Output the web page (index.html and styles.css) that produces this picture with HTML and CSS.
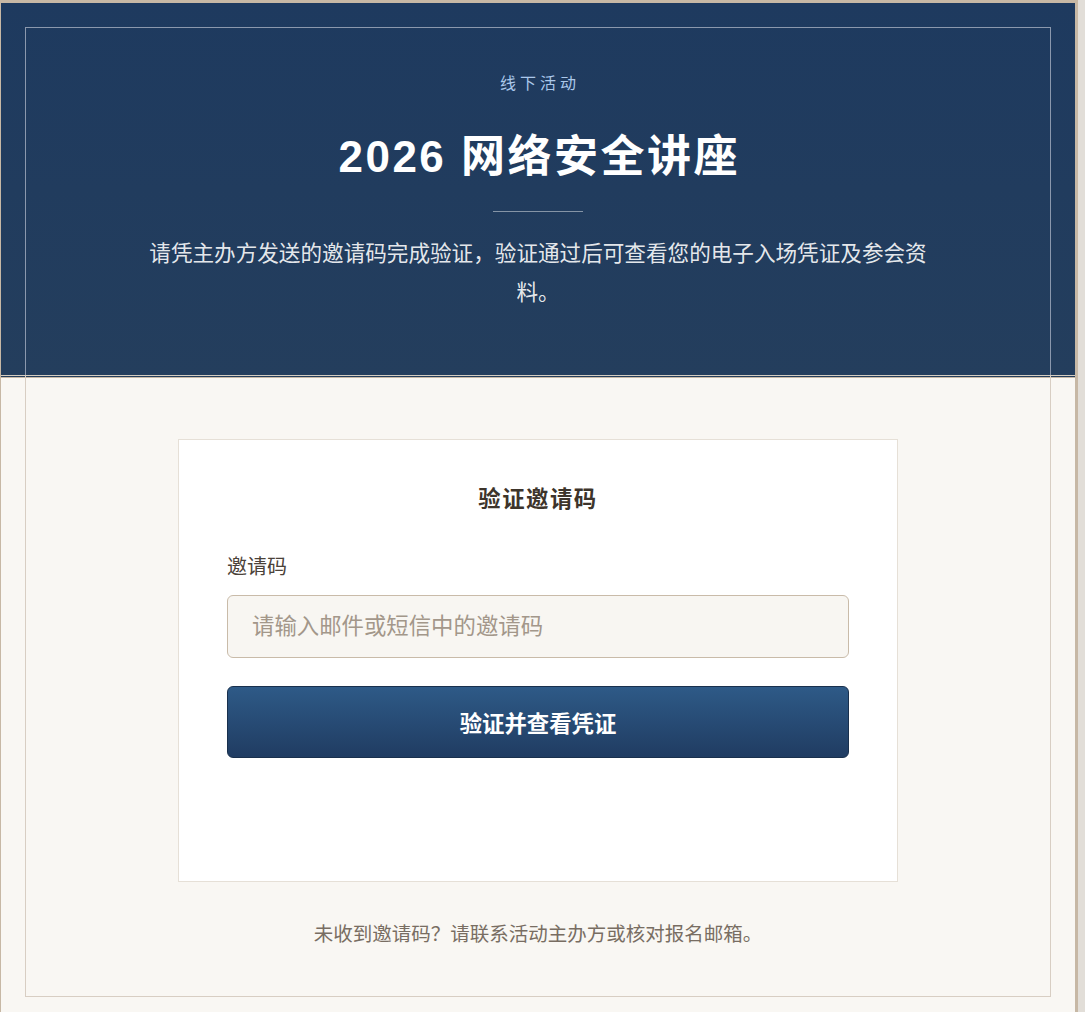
FILE: index.html
```html
<!DOCTYPE html>
<html lang="zh-CN">
<head>
<meta charset="utf-8">
<title>2026 网络安全讲座 - 验证邀请码</title>
<link rel="stylesheet" href="styles.css">
</head>
<body>
<div class="page">
  <header class="hero">
    <p class="eyebrow">线下活动</p>
    <h1 class="title">2026 网络安全讲座</h1>
    <div class="divider"></div>
    <p class="intro">请凭主办方发送的邀请码完成验证，验证通过后可查看您的电子入场凭证及参会资料。</p>
  </header>
  <main class="content">
    <form class="card" onsubmit="return false;">
      <h2 class="card-title">验证邀请码</h2>
      <label class="field-label" for="code">邀请码</label>
      <input class="field-input" id="code" type="text" placeholder="请输入邮件或短信中的邀请码">
      <button class="submit" type="submit">验证并查看凭证</button>
      <p class="message" aria-live="polite"></p>
    </form>
    <p class="help">未收到邀请码？请联系活动主办方或核对报名邮箱。</p>
  </main>
  <div class="frame"></div>
</div>
</body>
</html>
```
FILE: styles.css
```css
html {
  background: linear-gradient(to right, #c7b8a5 0, #c7b8a5 1078px, #e2ded8 1078px);
  overflow: hidden;
}
body {
  margin: 0;
  padding: 3px 0 0 1px;
  font-family: "Liberation Sans", "Noto Sans CJK SC", sans-serif;
}
.page {
  position: relative;
  width: 1074px;
  min-height: 1018px;
  background: #f9f7f3;
}
.hero {
  box-sizing: border-box;
  height: 375px;
  padding-top: 71px;
  background: linear-gradient(180deg, #1e3a5f 0%, #243e5d 100%);
  border-bottom: 1px solid #c7b8a5;
  box-shadow: inset 0 -1px 0 #243e5d, inset 0 -2px 0 #d6cec2;
  text-align: center;
}
.eyebrow {
  margin: 0;
  font-size: 16px;
  line-height: 20px;
  letter-spacing: 4px;
  padding-left: 4px;
  color: #abc8ea;
}
.title {
  margin: 38px 0 0;
  font-size: 44px;
  line-height: 50px;
  font-weight: 700;
  letter-spacing: 2.5px;
  padding-left: 2.5px;
  color: #ffffff;
}
.divider {
  width: 90px;
  height: 1px;
  margin: 29px auto 0;
  background: rgba(255, 255, 255, 0.45);
}
.intro {
  max-width: 780px;
  margin: 23px auto 0;
  font-size: 21.6px;
  line-height: 1.8;
  color: rgba(255, 255, 255, 0.9);
}
.content {
  display: flex;
  flex-direction: column;
  align-items: center;
  padding-top: 61px;
}
.card {
  box-sizing: border-box;
  width: 720px;
  padding: 48px 48px 0;
  background: #ffffff;
  border: 1px solid #e6e0d7;
  display: flex;
  flex-direction: column;
}
.card-title {
  margin: 0;
  text-align: center;
  font-size: 22.4px;
  line-height: 24px;
  letter-spacing: 1.5px;
  font-weight: 700;
  color: #3d342b;
}
.field-label {
  margin-top: 40px;
  font-size: 20px;
  line-height: 30px;
  color: #4b4239;
}
.field-input {
  box-sizing: border-box;
  height: 63px;
  margin-top: 13px;
  padding: 0 24px;
  background: #f8f6f2;
  border: 1px solid #c9bba9;
  border-radius: 6px;
  font-family: inherit;
  font-size: 22.4px;
  color: #3d342b;
  outline: none;
}
.field-input::placeholder {
  color: #a3978a;
}
.submit {
  box-sizing: border-box;
  height: 72px;
  margin-top: 28px;
  background: linear-gradient(180deg, #2e5a87 0%, #203c62 100%);
  border: 1px solid #19304d;
  border-radius: 6px;
  font-family: inherit;
  font-size: 22.4px;
  font-weight: 700;
  color: #ffffff;
  cursor: pointer;
}
.message {
  margin: 0;
  min-height: 123px;
}
.help {
  margin: 36px 0 0;
  font-size: 19.5px;
  line-height: 32px;
  color: #786d62;
}
.frame {
  position: absolute;
  top: 24px;
  left: 24px;
  right: 24px;
  bottom: 24px;
  border: 1px solid #d8cec3;
  border-image: linear-gradient(180deg, #8b98ad 0, #8b98ad 348px, #d8cec3 348px) 1;
  pointer-events: none;
}
```
